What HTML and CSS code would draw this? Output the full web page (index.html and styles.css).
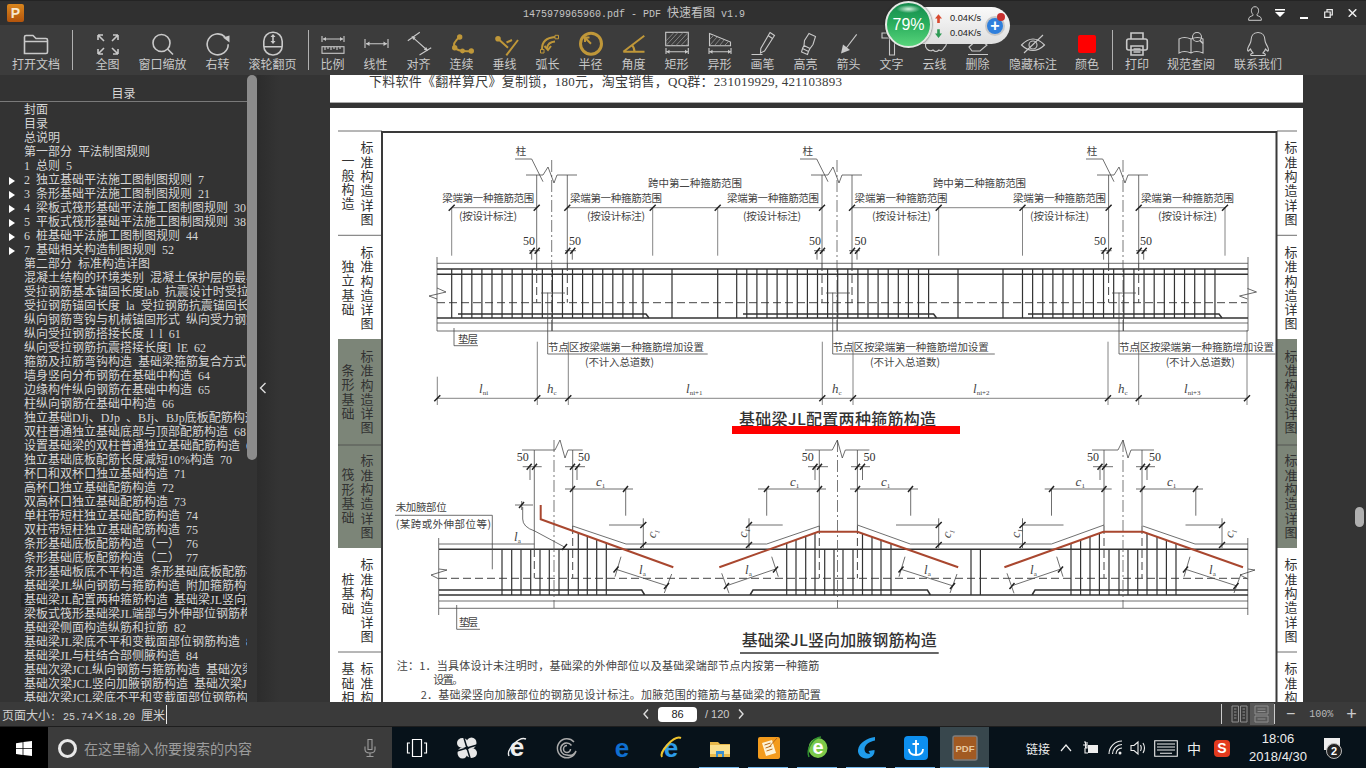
FILE: index.html
```html
<!DOCTYPE html>
<html lang="zh-CN">

<head>
    <meta charset="UTF-8">
    <title>PDF 快速看图</title>
    <link rel="stylesheet" href="styles.css">
</head>

<body>
    <header class="titlebar">
        <div class="logo">P</div>
        <div class="doc-title">1475979965960.pdf - PDF <span class="cjk">快速看图</span> v1.9</div>
        <div class="win-btns">
            <svg class="win-user" viewBox="0 0 14 15"><path d="M7 .7c-2.4 0-3.6 1.800-3.600 4 0 1.500.6 2.800 1.500 3.600v1.200C3 10.300.7 11 .7 12.700v1.600h12.600v-1.600c0-1.700-2.300-2.400-4.200-3.200V8.300c.9-.8 1.500-2.100 1.500-3.600 0-2.200-1.200-4-3.600-4z"/></svg>
            <svg class="win-menu" viewBox="0 0 10 8"><path d="M0 0h10v1.600H0zM0 3h10L5 8z"/></svg>
            <svg class="win-min" viewBox="0 0 8 8"><path d="M0 6h8v2H0z"/></svg>
            <svg class="win-max" viewBox="0 0 9 9"><path d="M.7 3h5.500v5.300H.7zM3 3V.7h5.300V6H6.200"/></svg>
            <svg class="win-close" viewBox="0 0 9 8"><path d="M.7.3l7.600 7.400M8.300.3L.7 7.700"/></svg>
        </div>
    </header>

    <nav class="toolbar">
        <div class="tool t-open"><svg viewBox="0 0 28 28"><path d="M2.500 24.500V8q0-1.500 1.500-1.500h7l3 3h10q1.500 0 1.500 1.500v12q0 1.500-1.500 1.500zM2.500 12.500h23"/></svg><span>打开文档</span></div>
        <i class="sep"></i>
        <div class="tool wide"><svg viewBox="0 0 28 28"><path d="M4 6l6 6M4 6h5M4 6v5M24 6l-6 6M24 6h-5M24 6v5M4 25l6-6M4 25h5M4 25v-5M24 25l-6-6M24 25h-5M24 25v-5"/></svg><span>全图</span></div>
        <div class="tool wide"><svg viewBox="0 0 28 28"><circle cx="12.500" cy="14" r="8.500"/><path d="M18.500 20l5.500 5.500"/></svg><span>窗口缩放</span></div>
        <div class="tool wide"><svg viewBox="0 0 28 28"><path d="M21 7.800A10.500 10.500 0 1 0 24.200 15.300"/><path class="solid" d="M19 8.500l6.500-2v7z"/></svg><span>右转</span></div>
        <div class="tool wide"><svg viewBox="0 0 28 28"><rect x="4.800" y="3.300" width="18.400" height="22.700" rx="9"/><path d="M5 17.700h18M14 6v8"/><path class="solid" d="M11.500 8L14 5l2.500 3zM11.500 12L14 15l2.500-3z"/></svg><span>滚轮翻页</span></div>
        <i class="sep"></i>
        <div class="tool first"><svg viewBox="0 0 28 28"><path class="fine" d="M3 7v6M25 7v6M4 10h20"/><rect class="fine" x="3" y="17.700" width="22" height="6.600"/><path class="fine" d="M6 18v3M9 18v2M12 18v3M15 18v2M18 18v3M21 18v2"/><path class="solid" d="M4 10l3-2v4zM24 10l-3-2v4z"/></svg><span>比例</span></div>
        <div class="tool"><svg viewBox="0 0 28 28"><path class="fine" d="M3 10v9M26 10v9M4 14.700h21"/><path class="solid" d="M4 14.700l3.500-2.200v4.400zM25 14.700l-3.500-2.200v4.400z"/></svg><span>线性</span></div>
        <div class="tool"><svg viewBox="0 0 28 28"><path class="fine" d="M2.800 11.700l12-8.400M14.500 26l11.700-7.300M7 7.700l15.500 13.800"/><path class="solid" d="M6.500 7.200l4.200 1.200-2.400 2.700zM23 22l-4.200-1.200 2.400-2.700z"/></svg><span>对齐</span></div>
        <div class="tool"><svg class="gold" viewBox="0 0 28 28"><path d="M11.700 8Q4 14 6.700 18.700 10 23 23.300 22"/><circle class="gold-dot" cx="11.700" cy="8" r="2.700"/><circle class="gold-dot" cx="6.700" cy="18.700" r="2.700"/><circle class="gold-dot" cx="14.500" cy="22" r="2.400"/><circle class="gold-dot" cx="23.300" cy="22" r="2.700"/></svg><span>连续</span></div>
        <div class="tool"><svg class="gold" viewBox="0 0 28 28"><path d="M7 9.700l10 9M27 11L15.300 26.300M15.500 13.500l5.500-2.500"/><circle class="gold-dot" cx="7" cy="9.700" r="2.800"/></svg><span>垂线</span></div>
        <div class="tool"><svg class="gold" viewBox="0 0 28 28"><path d="M8 20Q8 9 21 8M13 19q1-6 8-6.500"/><path class="thin-gold" d="M6.500 20.500h3.500v3.500H6.500zM21 6.300h3.500v3.500H21z"/><path d="M10.500 17l3.500 4 3-4"/></svg><span>弧长</span></div>
        <div class="tool"><svg class="gold" viewBox="0 0 28 28"><circle class="ring" cx="14" cy="14.700" r="10.500"/><path d="M14 14.700l-6-6M8 13V8.500h4.500"/></svg><span>半径</span></div>
        <div class="tool"><svg class="gold" viewBox="0 0 28 28"><path d="M3.300 22.700H24.500M3.300 22.700L24.300 6.700M14.500 23q0-4.500-3-7.500"/></svg><span>角度</span></div>
        <div class="tool"><svg viewBox="0 0 28 28"><rect class="fine" x="2.700" y="3.300" width="22.600" height="13.400"/><path class="hatch" d="M3 12l8-8.500M3 16.500L15 3.500M8 16.500L20 3.500M13 16.500L25 3.500M18 16.500l7-7.500M23 16.500l2-2"/><path class="fine" d="M3 19v6M25.300 19v6M3 22.700h22.300"/><path class="solid" d="M3.500 22.700l3-2v4zM25 22.700l-3-2v4z"/></svg><span>矩形</span></div>
        <div class="tool"><svg viewBox="0 0 28 28"><path class="fine" d="M3.500 4.500l21 8.500v3.700h-21z"/><path class="hatch" d="M4 10l4-4M4 16l7-8M9 16l6-7M14 16l4-5M19 16l3-3"/><path class="fine" d="M3 19v6M25 19v6M3 22.700h22"/><path class="solid" d="M3.500 22.700l3-2v4zM25 22.700l-3-2v4z"/></svg><span>异形</span></div>
        <div class="tool"><svg viewBox="0 0 28 28"><path class="fine" d="M21 3.500l4.500 3L15.500 22l-4 2 .3-4.500zM19 6.500l4.500 3M2.500 25.500h11"/></svg><span>画笔</span></div>
        <div class="tool"><svg viewBox="0 0 28 28"><path class="fine" d="M17 4.500l6.500 3-2.500 8-3 4-6-3 .5-5zM12 16.500l6 3-1.500 3-6-3zM10.500 19.500l6 3-1 3-6-2.500z"/></svg><span>高亮</span></div>
        <div class="tool"><svg viewBox="0 0 28 28"><path class="fine" d="M21.700 5.300L9 22"/><path class="solid" d="M6 24.500l2-9 7 5.500z"/></svg><span>箭头</span></div>
        <div class="tool"><svg viewBox="0 0 28 28"><path class="fine" d="M4 4h20v5h-7.500v17h-5V9H4z"/></svg><span>文字</span></div>
        <div class="tool"><svg viewBox="0 0 28 28"><path class="fine" d="M6 20q-4-5 2-8 1-6 7-4 6-3 8 3 5 3 0 8-2 4-5 2-3 3-6 0-3 2-6-1z"/></svg><span>云线</span></div>
        <div class="tool"><svg viewBox="0 0 28 28"><path class="fine" d="M5 18l9-8 9 6-7 6H8zM4 25.500h20"/></svg><span>删除</span></div>
        <div class="tool t-hide"><svg viewBox="0 0 28 28"><path class="fine" d="M2.500 16Q14 4 25.500 16 14 27 2.500 16z"/><circle class="fine" cx="14" cy="16" r="4"/><path class="fine" d="M24 6L5 24"/></svg><span>隐藏标注</span></div>
        <div class="tool t-color"><svg viewBox="0 0 28 28"><rect class="swatch" x="5" y="6" width="18" height="18" rx="2"/></svg><span>颜色</span></div>
        <i class="sep sep-print"></i>
        <div class="tool t-print"><svg viewBox="0 0 28 28"><path d="M8 10V4h12v6"/><rect x="3.700" y="10" width="20.600" height="11" rx="2"/><path d="M8 17h12v9H8zM10.500 20h7M10.500 23h7"/></svg><span>打印</span></div>
        <div class="tool t-spec"><svg viewBox="0 0 28 28"><path class="fine" d="M2 24V10q5-3 12 0 7-3 12 0v14q-7-3-12 0-7-3-12 0zM14 10v14"/><circle class="fine" cx="20" cy="8" r="4.500"/><path d="M23 11.500l3 3"/></svg><span>规范查阅</span></div>
        <div class="tool t-qq"><svg viewBox="0 0 28 28"><path class="fine" d="M14 3.500c-5 0-7 4-7 8 0 2-1 3-2.500 6-1.500 3-1 5 0 4.500l2-2c.5 2 1.500 3 2.500 4-2 .5-3 1.500-2 2.500h14c1-1 0-2-2-2.500 1-1 2-2 2.500-4l2 2c1 .5 1.500-1.500 0-4.500-1.500-3-2.500-4-2.500-6 0-4-2-8-7-8z"/></svg><span>联系我们</span></div>
    </nav>

    <div class="speed">
        <div class="speed-ball">79%</div>
        <div class="speed-rates">
            <p><svg class="up" viewBox="0 0 8 10"><path d="M4 0l4 5H5.500v5h-3V5H0z"/></svg>0.04K/s</p>
            <p><svg class="down" viewBox="0 0 8 10"><path d="M4 10L0 5h2.500V0h3v5H8z"/></svg>0.04K/s</p>
        </div>
        <div class="speed-plus">+<i></i></div>
    </div>

    <main class="workspace">
        <aside class="toc">
            <div class="toc-main">
                <h2>目录</h2>
                <ul>
                    <li>封面</li>
                    <li>目录</li>
                    <li>总说明</li>
                    <li>第一部分 平法制图规则</li>
                    <li>1 总则 5</li>
                    <li class="branch">2 独立基础平法施工图制图规则 7</li>
                    <li class="branch">3 条形基础平法施工图制图规则 21</li>
                    <li class="branch">4 梁板式筏形基础平法施工图制图规则 30</li>
                    <li class="branch">5 平板式筏形基础平法施工图制图规则 38</li>
                    <li class="branch">6 桩基础平法施工图制图规则 44</li>
                    <li class="branch">7 基础相关构造制图规则 52</li>
                    <li>第二部分 标准构造详图</li>
                    <li>混凝土结构的环境类别 混凝土保护层的最小厚度 54</li>
                    <li>受拉钢筋基本锚固长度lab 抗震设计时受拉钢筋基本锚固长度</li>
                    <li>受拉钢筋锚固长度 la 受拉钢筋抗震锚固长度 laE</li>
                    <li>纵向钢筋弯钩与机械锚固形式 纵向受力钢筋</li>
                    <li>纵向受拉钢筋搭接长度 l l 61</li>
                    <li>纵向受拉钢筋抗震搭接长度l lE 62</li>
                    <li>箍筋及拉筋弯钩构造 基础梁箍筋复合方式 63</li>
                    <li>墙身竖向分布钢筋在基础中构造 64</li>
                    <li>边缘构件纵向钢筋在基础中构造 65</li>
                    <li>柱纵向钢筋在基础中构造 66</li>
                    <li>独立基础DJj、DJp 、BJj、BJp底板配筋构造 67</li>
                    <li>双柱普通独立基础底部与顶部配筋构造 68</li>
                    <li>设置基础梁的双柱普通独立基础配筋构造 69</li>
                    <li>独立基础底板配筋长度减短10%构造 70</li>
                    <li>杯口和双杯口独立基础构造 71</li>
                    <li>高杯口独立基础配筋构造 72</li>
                    <li>双高杯口独立基础配筋构造 73</li>
                    <li>单柱带短柱独立基础配筋构造 74</li>
                    <li>双柱带短柱独立基础配筋构造 75</li>
                    <li>条形基础底板配筋构造（一） 76</li>
                    <li>条形基础底板配筋构造（二） 77</li>
                    <li>条形基础板底不平构造 条形基础底板配筋构造</li>
                    <li>基础梁JL纵向钢筋与箍筋构造 附加箍筋构造</li>
                    <li class="current">基础梁JL配置两种箍筋构造 基础梁JL竖向加腋钢筋构造</li>
                    <li>梁板式筏形基础梁JL端部与外伸部位钢筋构造</li>
                    <li>基础梁侧面构造纵筋和拉筋 82</li>
                    <li>基础梁JL梁底不平和变截面部位钢筋构造 83</li>
                    <li>基础梁JL与柱结合部侧腋构造 84</li>
                    <li>基础次梁JCL纵向钢筋与箍筋构造 基础次梁</li>
                    <li>基础次梁JCL竖向加腋钢筋构造 基础次梁JCL</li>
                    <li>基础次梁JCL梁底不平和变截面部位钢筋构造</li>
                </ul>
            </div>
            <div class="toc-scroll"><i></i></div>
        </aside>

        <section class="viewer">
            <div class="collapse"><svg viewBox="0 0 8 12"><path d="M6.500 1L1.500 6l5 5"/></svg></div>
            <div class="pages">
                <div class="page page-prev">
                    <p>下料软件《翻样算尺》复制锁，180元，淘宝销售，QQ群：231019929, 421103893</p>
                </div>
                <div class="page page-cur">
                    <svg class="sheet" viewBox="330 108 973 594">
                        <!-- 边栏 -->
                        <rect class="tab-grey" x="338" y="339" width="44" height="209"/>
                        <rect class="tab-grey" x="1277" y="339" width="20" height="209"/>
                        <path class="thin" d="M338 131h44M338 235.300h44M338 445h44M338 652h44M1277 131h20M1277 235.300h20M1277 445h20M1277 652h20"/>
                        <path class="frame" d="M382 702V132H1276.500V702"/>

                        <text class="tab" x="367" y="141">标准构造详图</text>
                        <text class="tab" x="348" y="154">一般构造</text>
                        <text class="tab" x="367" y="245.500">标准构造详图</text>
                        <text class="tab" x="348" y="259.500">独立基础</text>
                        <text class="tab" x="367" y="349.500">标准构造详图</text>
                        <text class="tab" x="348" y="363.500">条形基础</text>
                        <text class="tab" x="367" y="454">标准构造详图</text>
                        <text class="tab" x="348" y="468">筏形基础</text>
                        <text class="tab" x="367" y="558">标准构造详图</text>
                        <text class="tab" x="348" y="572.500">桩基础</text>
                        <text class="tab" x="367" y="662">标准构造详图</text>
                        <text class="tab" x="348" y="662">基础相关</text>

                        <text class="tab" x="1291" y="141">标准构造详图</text>
                        <text class="tab" x="1291" y="245.500">标准构造详图</text>
                        <text class="tab" x="1291" y="349.500">标准构造详图</text>
                        <text class="tab" x="1291" y="454">标准构造详图</text>
                        <text class="tab" x="1291" y="558">标准构造详图</text>
                        <text class="tab" x="1291" y="662">标准构造详图</text>
                        <rect class="paper" x="1297" y="108" width="6" height="594"/>

                        <!-- 上图：配置两种箍筋 -->
                        <path class="thin" d="M437 263.300H1248M437 323H1248M437 331H1248M437 257v74M1248 257v74"/>
                        <path class="rebar" d="M437 269H1248M437 274.300H1248M437 318H1248"/>
                        <path class="rebar" d="M458 314H646l3 4M743 314H933.600l3 4M1028 314H1219l3 4"/>
                        <path class="dash" d="M437 302.700H1247M536.700 263V302.700M567.300 263V302.700M822 263V302.700M852 263V302.700M1108.600 263V302.700M1138.700 263V302.700"/>
                        <path class="center" d="M551.700 160V331M837 160V331M1123 160V331"/>
                        <path class="stir" d="M451.700 269v49m10.070-49v49m10.070-49v49m10.070-49v49m10.070-49v49m10.070-49v49m10.070-49v49m10.070-49v49m10.070-49v49m10.070-49v49m10.070-49v49m10.070-49v49m10.070-49v49m10.070-49v49m10.070-49v49m10.070-49v49m10.070-49v49m10.070-49v49m10.070-49v49m10.070-49v49M672 269v49M717.700 269v49M736.700 269v49m10.100-49v49m10.100-49v49m10.100-49v49m10.100-49v49m10.100-49v49m10.100-49v49m10.100-49v49m10.100-49v49m10.100-49v49m10.100-49v49m10.100-49v49m10.100-49v49m10.100-49v49m10.100-49v49m10.100-49v49m10.100-49v49m10.100-49v49m10.100-49v49m10.100-49v49M958 269v49M1003 269v49M1022.500 269v49m10.130-49v49m10.130-49v49m10.130-49v49m10.130-49v49m10.130-49v49m10.130-49v49m10.130-49v49m10.130-49v49m10.130-49v49m10.130-49v49m10.130-49v49m10.130-49v49m10.130-49v49m10.130-49v49m10.130-49v49m10.130-49v49m10.130-49v49m10.130-49v49m10.130-49v49"/>
                        <path class="zig" d="M437 288l9 4-17 4 8 3M1247.500 288.500l9 3.500-17 4 8 3"/>

                        <!-- 柱 -->
                        <path class="thin" d="M526 175h17l5-8 6 16 3-8h20M536.700 175v88M567.300 175v88M515 159h16.700L543 181.700"/>
                        <path class="thin" d="M811 175h17l5-8 6 16 3-8h20M822 175v88M852 175v88M800 159h16.700L828 181.700"/>
                        <path class="thin" d="M1097 175h17l5-8 6 16 3-8h20M1108.600 175v88M1138.700 175v88M1086 159h16.700l11.300 22.700"/>
                        <text class="lb" x="521" y="151" text-anchor="middle" dy=".35em">柱</text>
                        <text class="lb" x="807.700" y="151" text-anchor="middle" dy=".35em">柱</text>
                        <text class="lb" x="1092" y="151" text-anchor="middle" dy=".35em">柱</text>

                        <path class="gray" d="M451.700 207.700H536.700M567.300 207.700H822M852 207.700H1108.600M1138.700 207.700H1225M451.700 207.700v48M652.700 207.700v48M717.700 207.700v48M938.700 207.700v48M1022.500 207.700v48M1225 207.700v48"/>
                        <path class="tick" d="M448.700 210.700l6-6M533.700 210.700l6-6M564.300 210.700l6-6M649.700 210.700l6-6M714.700 210.700l6-6M819 210.700l6-6M849 210.700l6-6M935.700 210.700l6-6M1019.500 210.700l6-6M1105.600 210.700l6-6M1135.700 210.700l6-6M1222 210.700l6-6"/>

                        <g class="lb">
                            <text x="442.300" y="202" textLength="92">梁端第一种箍筋范围</text>
                            <text x="570" y="202" textLength="92">梁端第一种箍筋范围</text>
                            <text x="727" y="202" textLength="92">梁端第一种箍筋范围</text>
                            <text x="854.600" y="202" textLength="93">梁端第一种箍筋范围</text>
                            <text x="1013" y="202" textLength="93">梁端第一种箍筋范围</text>
                            <text x="1141" y="202" textLength="93">梁端第一种箍筋范围</text>
                            <text x="459" y="220" textLength="58">(按设计标注)</text>
                            <text x="587" y="220" textLength="58">(按设计标注)</text>
                            <text x="743" y="220" textLength="58">(按设计标注)</text>
                            <text x="872" y="220" textLength="59">(按设计标注)</text>
                            <text x="1030" y="220" textLength="59">(按设计标注)</text>
                            <text x="1158" y="220" textLength="59">(按设计标注)</text>
                            <text x="648" y="187" textLength="94">跨中第二种箍筋范围</text>
                            <text x="933" y="187" textLength="93">跨中第二种箍筋范围</text>
                            <text x="548" y="351" textLength="156">节点区按梁端第一种箍筋增加设置</text>
                            <text x="832.700" y="351" textLength="156">节点区按梁端第一种箍筋增加设置</text>
                            <text x="1119" y="351" textLength="155">节点区按梁端第一种箍筋增加设置</text>
                            <text x="585" y="366" textLength="69">(不计入总道数)</text>
                            <text x="870" y="366" textLength="70">(不计入总道数)</text>
                            <text x="1165.700" y="366" textLength="69">(不计入总道数)</text>
                            <text x="458" y="343" textLength="20">垫层</text>
                        </g>

                        <g class="num">
                            <text x="523" y="245" textLength="12">50</text>
                            <text x="569" y="245" textLength="12">50</text>
                            <text x="809" y="245" textLength="12">50</text>
                            <text x="854.600" y="245" textLength="12">50</text>
                            <text x="1094" y="245" textLength="12">50</text>
                            <text x="1140" y="245" textLength="12">50</text>
                        </g>
                        <path class="thin" d="M529 250.700h11M531.700 250.700v9M565 250.700h11M572.300 250.700v9M814 250.700h11M817 250.700v9M849 250.700h11M857 250.700v9M1100.600 250.700h11M1103.600 250.700v9M1136 250.700h11M1143.700 250.700v9"/>
                        <path class="tick" d="M529.700 253.700l5-6M534.700 253.700l5-6M565.300 253.700l5-6M570.300 253.700l5-6M815 253.700l5-6M820 253.700l5-6M850 253.700l5-6M855 253.700l5-6M1101.600 253.700l5-6M1106.600 253.700l5-6M1136.700 253.700l5-6M1141.700 253.700l5-6"/>

                        <path class="thin" d="M541 293h24M547.700 292.700V354H707.700M552.300 293V331M826 293h24M832.700 292.700V354H994.800M837.300 293V331M1112 293h24M1119 292.700V354H1275.500M1123.500 293V331"/>
                        <path class="thin" d="M454 328v17.700h24"/>

                        <path class="gray" d="M437.300 398.300H1247M437.300 376.700V405M537.300 341.700V405M568.300 341.700V405M822.300 341.700V405M853 341.700V405M1108 341.700V405M1138.700 341.700V405M1247 330V405"/>
                        <path class="tick" d="M434.300 401.300l6-6M534.300 401.300l6-6M565.300 401.300l6-6M819.300 401.300l6-6M850 401.300l6-6M1105 401.300l6-6M1135.700 401.300l6-6M1244 401.300l6-6"/>
                        <g class="dim">
                            <text x="479" y="393">l<tspan class="sub" dy="2">ni</tspan></text>
                            <text x="547" y="393">h<tspan class="sub" dy="2">c</tspan></text>
                            <text x="686" y="393">l<tspan class="sub" dy="2">ni+1</tspan></text>
                            <text x="832" y="393">h<tspan class="sub" dy="2">c</tspan></text>
                            <text x="973" y="393">l<tspan class="sub" dy="2">ni+2</tspan></text>
                            <text x="1118" y="393">h<tspan class="sub" dy="2">c</tspan></text>
                            <text x="1184" y="393">l<tspan class="sub" dy="2">ni+3</tspan></text>
                        </g>

                        <text class="head" x="739" y="425" textLength="197">基础梁JL配置两种箍筋构造</text>
                        <rect class="mark" x="732" y="426" width="228" height="8"/>

                        <!-- 下图：竖向加腋 -->
                        <path class="thin" d="M439 544H534.300M438.700 538V615M1247.800 538V615M439 601H1248M439 608.300H1248M572.700 526L626 544H766.700L819.300 526M857.400 525L910.300 544H1051.500L1104 525M1142.800 526L1195 544H1248"/>
                        <path class="rebar" d="M439 549.300H1248M439 595H1248M439 590H641.700l3 5M750 595l3-5H927.400l3 5M1032 595l3-5H1248"/>
                        <path class="dash" d="M439 578.300H1247M534.300 549V578.300M572.700 526V578.300M819.300 526V578.300M857.400 526V578.300M1104 526V578.300M1142 526V578.300"/>
                        <path class="center" d="M554 440V608M837.500 440V608M1123 440V608"/>
                        <path class="thin" d="M522 450h12.300M534.300 450v99M534.300 450h20.700l5-10 5 18 3-8h4.700M572.700 450v76M572.700 450h10"/>
                        <path class="thin" d="M805 450h14.300M819.300 450h13l5-10 5 18 3-8h12.100M819.300 450v76M857.400 450v76M857.400 450h12"/>
                        <path class="thin" d="M1092 450h12M1104 450h14l5-10 5 18 3-8h11M1104 450v76M1142 450v76M1142 450h12"/>
                        <path class="zig" d="M439 569l8 1-16 5 8 4M1248 569l7 1-15 5 8 4"/>
                        <path class="stir" d="M502 549.300V595M511.700 549.300V595M521 549.300V595M530.700 549.300V595M540 549.300V595M549.300 549.300V595M559 549.300V595M568.300 549.300V595M578.300 532.800V595M587.300 536V595M596.700 539.700V595M606.300 543V595M786.700 543V595M796 539.700V595M805.700 536V595M815 533V595M824.700 549.300V595M834 549.300V595M843 549.300V595M853 549.300V595M862.500 533.500V595M872 536.900V595M881 540V595M891 543.500V595M971 549.300V595M980.400 549.300V595M1071 543.300V595M1080.600 540V595M1090 536.500V595M1099.400 533V595M1109 549.300V595M1119 549.300V595M1128 549.300V595M1137.700 549.300V595M1147 533V595M1157 536.700V595M1166.400 540V595M1176 543.500V595"/>
                        <path class="red" d="M540.700 505V519.300L673.300 567.300M719.300 567.300L818.300 531.700H857.400L958.200 567.300M1004.400 567.300L1103.500 531.700H1142.800L1243 567.300"/>

                        <path class="thin" d="M522.700 466.700h19M530 466.700V480M565 466.700h20M577 466.700V480M808 466.700h20M815 466.700V480M851 466.700h19M862.500 466.700V480M1093 466.700h20M1100 466.700V480M1136 466.700h19M1147 466.700V480"/>
                        <path class="tick" d="M526.700 469.700l5-6M532 469.700l5-6M570 469.700l5-6M575 469.700l5-6M812.500 469.700l5-6M817 469.700l5-6M855 469.700l5-6M860 469.700l5-6M1097.500 469.700l5-6M1102 469.700l5-6M1140 469.700l5-6M1145 469.700l5-6"/>
                        <g class="num">
                            <text x="516.700" y="461" textLength="12">50</text>
                            <text x="578" y="461" textLength="12">50</text>
                            <text x="801.700" y="461" textLength="12">50</text>
                            <text x="863.500" y="461" textLength="12">50</text>
                            <text x="1087" y="461" textLength="12">50</text>
                            <text x="1149" y="461" textLength="12">50</text>
                        </g>

                        <path class="thin" d="M565 489h68M625.700 489v26.700M758 489h68M766.700 489v26.700M850 489h68M910.700 489v26.700M1044.700 489h67M1051.500 489v26.700M1136 489h67M1195.800 489v26.700"/>
                        <path class="tick" d="M570 492l5-6M623 492l5-6M764 492l5-6M817 492l5-6M855 492l5-6M908 492l5-6M1049 492l5-6M1101.500 492l5-6M1140 492l5-6M1193 492l5-6"/>
                        <g class="dim">
                            <text x="596" y="486">c<tspan class="sub" dy="2">1</tspan></text>
                            <text x="790" y="486">c<tspan class="sub" dy="2">1</tspan></text>
                            <text x="881" y="486">c<tspan class="sub" dy="2">1</tspan></text>
                            <text x="1075.600" y="486">c<tspan class="sub" dy="2">1</tspan></text>
                            <text x="1167" y="486">c<tspan class="sub" dy="2">1</tspan></text>
                            <text transform="rotate(-70 652.700 533)" x="648" y="537">c<tspan class="sub" dy="2">1</tspan></text>
                            <text transform="rotate(-80 743.300 533)" x="739" y="537">c<tspan class="sub" dy="2">1</tspan></text>
                            <text transform="rotate(-70 947.600 533)" x="943" y="537">c<tspan class="sub" dy="2">1</tspan></text>
                            <text transform="rotate(-80 1016 533)" x="1011.500" y="537">c<tspan class="sub" dy="2">1</tspan></text>
                            <text transform="rotate(-70 1230 533)" x="1225.500" y="537">c<tspan class="sub" dy="2">1</tspan></text>
                        </g>
                        <path class="thin" d="M609 525h34.300M643.300 518.300V548M749 518.300V548M749 525h33.700M896 525h42.700M938.700 518.300V548M1022.500 518.300V548M1022.500 525h41M1185.500 525h36.500M1222 518.300V548"/>
                        <path class="tick" d="M640.300 528l6-6M640.300 548l6-6M746 528l6-6M746 548l6-6M935.700 528l6-6M935.700 548l6-6M1019.500 528l6-6M1019.500 548l6-6M1219 528l6-6M1219 548l6-6"/>

                        <path class="thin" d="M515 505h18M521.700 501v9M522.700 507v12q0 8 12 12L565 547.300"/>
                        <path class="tick" d="M519 508l5-6M562 550l5-6"/>
                        <path class="thin" d="M616 569.300L666.700 585.700M621 556.700L615 576.700M671.700 574L664.300 593M726.700 585.700L775.700 569M721.700 573.300L729 593.300M771.700 556.700L778.300 576.700M901 569.300L952.400 585.700M905 556.700L899 576.700M957 574L950 593M1012 585.700L1060.800 569M1007 573.300L1014 593.300M1056.700 556.700L1063 576.700M1185.600 569.300L1236 585.700M1190 556.700L1184 576.700M1241 574L1234 593"/>
                        <path class="tick" d="M613.500 572.500l5-6M664 589l5-6M724 589l5-6M773 572.500l5-6M898.500 572.500l5-6M950 589l5-6M1009.500 589l5-6M1058 572.500l5-6M1183 572.500l5-6M1233.500 589l5-6"/>
                        <g class="dim">
                            <text x="514" y="541">l<tspan class="sub" dy="2">a</tspan></text>
                            <text x="639" y="574">l<tspan class="sub" dy="2">a</tspan></text>
                            <text x="745" y="574">l<tspan class="sub" dy="2">a</tspan></text>
                            <text x="924" y="574">l<tspan class="sub" dy="2">a</tspan></text>
                            <text x="1030" y="574">l<tspan class="sub" dy="2">a</tspan></text>
                            <text x="1209" y="574">l<tspan class="sub" dy="2">a</tspan></text>
                        </g>

                        <path class="thin" d="M395 515.300H492.300V569.300M456.700 605V629.300H480"/>
                        <g class="lb">
                            <text x="395.700" y="511" textLength="51">未加腋部位</text>
                            <text x="395.700" y="528" textLength="95.300">(某跨或外伸部位等)</text>
                            <text x="459" y="626" textLength="19">垫层</text>
                        </g>

                        <text class="head" x="741.700" y="646" textLength="195">基础梁JL竖向加腋钢筋构造</text>
                        <path class="title-line" d="M740 653H938.700"/>

                        <g class="lb note">
                            <text x="396.700" y="670" textLength="422.600">注：1．当具体设计未注明时，基础梁的外伸部位以及基础梁端部节点内按第一种箍筋</text>
                            <text x="433.300" y="684" textLength="30">设置。</text>
                            <text x="420.700" y="699" textLength="400">2．基础梁竖向加腋部位的钢筋见设计标注。加腋范围的箍筋与基础梁的箍筋配置</text>
                        </g>
                    </svg>
                </div>
            </div>
            <div class="page-scroll"></div>
        </section>
    </main>

    <footer class="statusbar">
        <div class="size"><span class="cjk">页面大小</span>:<span class="size-val">25.74<span class="cjk">×</span>18.20 <span class="cjk">厘米</span></span></div>
        <div class="pager">
            <svg viewBox="0 0 8 12"><path d="M6 1.500L2 6l4 4.500"/></svg>
            <div class="page-input">86</div>
            <span>/ 120</span>
            <svg viewBox="0 0 8 12"><path d="M2 1.500L6 6l-4 4.500"/></svg>
        </div>
        <div class="view-btns">
            <i class="vsep"></i>
            <div class="view-btn"><svg viewBox="0 0 17 18"><path d="M1 1h6.500v16H1zM9.500 1H16v16H9.500zM3 4h2.500M3 7h2.500M3 10h2.500M3 13h2.500M11.500 4h2.500M11.500 7h2.500M11.500 10h2.500M11.500 13h2.500"/></svg></div>
            <div class="view-btn on"><svg viewBox="0 0 17 18"><path d="M2 1h13v8H2zM2 11h13v6H2zM4.500 4h8M4.500 6.500h8M4.500 14h8"/></svg></div>
            <i class="vsep"></i>
            <span class="zoom-minus">−</span>
            <span class="zoom-val">100%</span>
            <span class="zoom-plus">+</span>
        </div>
    </footer>

    <footer class="taskbar">
        <div class="start"><svg viewBox="0 0 16 15"><path d="M0 2.200L6.600 1.200v6H0zM7.400 1.100L16 0v7.200H7.400zM0 7.900h6.600v6L0 12.900zM7.400 7.900H16V15L7.400 13.900z"/></svg></div>
        <div class="search">
            <i class="cortana"></i>
            <span>在这里输入你要搜索的内容</span>
            <svg class="mic" viewBox="0 0 12 20"><path d="M4 1.500h4v10H4zM1 8.500v3q0 3.500 5 3.500t5-3.500v-3M6 15v3M2.500 18.500h7"/></svg>
        </div>
        <div class="apps">
            <div class="app"><svg viewBox="0 0 24 24"><path class="tv" d="M7.500 3.500h9v17h-9zM5 7H2.500v10H5M19 7h2.500v10H19"/></svg></div>
            <div class="app"><svg viewBox="0 0 24 24"><g class="white"><ellipse cx="7.500" cy="7" rx="5.500" ry="5"/><ellipse cx="16.500" cy="7" rx="5" ry="5.500"/><ellipse cx="7.500" cy="17" rx="5" ry="5.500"/><ellipse cx="16.500" cy="17" rx="5.500" ry="5"/></g><path class="cut" d="M12 12L9 2M12 12l10-3M12 12l3 10M12 12L2 15"/></svg></div>
            <div class="app"><svg viewBox="0 0 24 24"><text class="ie white-t" x="12" y="20" text-anchor="middle">e</text><path class="ring-w" d="M4 20C1 14 14 0 21 3"/></svg></div>
            <div class="app"><svg viewBox="0 0 24 24"><path class="spiral" d="M19 6A9.500 9.500 0 1 0 21 15 8 8 0 0 1 12 19 6 6 0 1 1 16.500 9.500M15.500 13A3.500 3.500 0 1 1 12 9.500"/></svg></div>
            <div class="app app-shift"><svg viewBox="0 0 24 24"><text class="ie edge" x="12" y="20.500" text-anchor="middle">e</text></svg></div>
            <div class="app"><svg viewBox="0 0 24 24"><text class="ie ieblue" x="12" y="20.500" text-anchor="middle">e</text><path class="ring-y" d="M3 21C0 16 15-1 22 2"/></svg></div>
            <div class="app run"><svg viewBox="0 0 24 24"><path class="fold-b" d="M2 6h8l2 2h10v13H2z"/><path class="fold-f" d="M2 9h20v9H2z"/><path class="fold-s" d="M8 15h8v6h-2v-3h-4v3H8z"/></svg></div>
            <div class="app run"><svg viewBox="0 0 24 24"><rect class="note-bg" x="1" y="1" width="22" height="22" rx="2"/><path class="note-pg" d="M5 7l10-3 4 13-10 3z"/><path class="note-ln" d="M7.500 9l6-2M8.500 12l6-2M9.500 15l6-2M20 2l-8 9"/></svg></div>
            <div class="app run"><svg viewBox="0 0 24 24"><ellipse class="green-b" cx="12" cy="12" rx="9.500" ry="10"/><text class="ie green-t" x="12" y="18" text-anchor="middle">e</text><path class="green-s" d="M3 21C0 14 6 2 15 1"/></svg></div>
            <div class="app run"><svg viewBox="0 0 24 24"><path class="blue-g" d="M20 1C13 2 4 6 3 14c-.5 5 4 9 9 8.500 5-.5 8-4 7.500-8.500l-6 1 1.500 2.500c-2 1-5.500-.5-5.500-4 0-5 5-8 10.500-9z"/></svg></div>
            <div class="app run"><svg viewBox="0 0 24 24"><rect class="anchor-bg" x="0" y="0" width="24" height="24" rx="4"/><path class="anchor" d="M12 4v15M8.500 8H15M5 13q0 6 7 6t7-6"/></svg></div>
            <div class="app run active"><svg viewBox="0 0 24 24"><rect class="pdf-bg" x="0" y="0" width="24" height="24" rx="2"/><text class="pdf-t" x="12" y="16" text-anchor="middle">PDF</text></svg></div>
        </div>
        <div class="tray">
            <span class="tray-link">链接</span>
            <svg class="t-up" viewBox="0 0 12 8"><path d="M1 7l5-6 5 6"/></svg>
            <svg class="t-bat" viewBox="0 0 16 14"><path class="solid-w" d="M5 4h10v8H5z"/><path class="line-w" d="M1 1h1.500v6H4V1M0 4h4M2 7v5h3"/></svg>
            <svg class="t-wifi" viewBox="0 0 16 16"><path class="line-w" d="M1 14A13 13 0 0 1 14 1M4.500 14A9.500 9.500 0 0 1 14 4.500M8 14A6 6 0 0 1 14 8"/><circle class="solid-w" cx="12" cy="13" r="1.500"/></svg>
            <svg class="t-vol" viewBox="0 0 16 16"><path class="line-w" d="M1 5.500h3L8 2v12l-4-3.500H1zM10.500 5q1.500 3 0 6M13 3q3 5 0 10"/></svg>
            <svg class="t-kbd" viewBox="0 0 24 17"><path class="line-w" d="M.7.700h22.600v15.600H.7zM3 4h18M3 7h18M3 10h18M6 13.300h12"/></svg>
            <span class="tray-ime">中</span>
            <div class="sogou">S</div>
            <div class="clock"><span>18:06</span><span>2018/4/30</span></div>
            <div class="notify">
                <svg viewBox="0 0 16 16"><path class="solid-w" d="M0 0h16v12H6l-3 3v-3H0z"/></svg>
                <b>2</b>
            </div>
        </div>
    </footer>
</body>

</html>
```

FILE: styles.css
```css
* {
    box-sizing: border-box;
}

html,
body {
    margin: 0;
    width: 1366px;
    height: 768px;
    overflow: hidden;
}

body {
    display: flex;
    flex-direction: column;
    position: relative;
    background: #333;
    color: #d4d4d4;
    font-family: "Noto Sans CJK SC", sans-serif;
    font-size: 12px;
}

svg {
    display: block;
}

/* title bar */
.titlebar {
    flex: 0 0 25px;
    display: flex;
    align-items: center;
    position: relative;
    background: #303030;
    border-top: 1px solid #242424;
}

.logo {
    width: 17px;
    height: 18px;
    margin-left: 7px;
    border-radius: 2px;
    background: linear-gradient(#d9861e, #b3540c);
    color: #f6e7cf;
    font: bold 14px/18px "Liberation Sans", sans-serif;
    text-align: center;
}

.doc-title {
    flex: 1;
    padding-right: 4px;
    color: #c4c4c4;
    font: 10px/14px "Liberation Mono", "Noto Sans CJK SC", monospace;
    text-align: center;
    white-space: pre;
}

.cjk {
    font-family: "Noto Sans CJK SC", sans-serif;
    font-size: 12px;
}

.win-btns {
    display: flex;
    align-items: center;
    margin-right: 9px;
}

.win-btns svg {
    fill: none;
    stroke: #eee;
    stroke-width: 1.2;
}

.win-user {
    width: 14px;
    height: 15px;
    stroke-width: 1 !important;
    stroke: #ccc !important;
}

.win-menu {
    width: 10px;
    height: 8px;
    margin-left: 13px;
    fill: #fff !important;
    stroke: none !important;
}

.win-min {
    width: 8px;
    height: 8px;
    margin: 3px 0 0 15px;
    fill: #fff !important;
    stroke: none !important;
}

.win-max {
    width: 9px;
    height: 9px;
    margin-left: 16px;
}

.win-close {
    width: 9px;
    height: 8px;
    margin-left: 15px;
    stroke-width: 1.5 !important;
}

/* toolbar */
.toolbar {
    flex: 0 0 50px;
    display: flex;
    padding: 4px 0 0 8px;
    background: #3c3c3c;
}

.tool {
    flex: 0 0 auto;
    width: 43px;
    display: flex;
    flex-direction: column;
    align-items: center;
}

.tool svg {
    width: 28px;
    height: 28px;
    fill: none;
    stroke: #c9c9c9;
    stroke-width: 1.6;
    overflow: visible;
}

.tool span {
    color: #c8c8c8;
    line-height: 14px;
    white-space: nowrap;
}

.t-open {
    width: 56px;
}

.wide {
    width: 55px;
}

.first {
    margin-left: 2px;
}

.t-hide {
    width: 68px;
}

.t-color {
    width: 40px;
}

.t-print {
    width: 48px;
}

.t-spec {
    width: 60px;
}

.t-qq {
    width: 74px;
}

.sep {
    flex: 0 0 1px;
    height: 40px;
    margin: 1px 7px 0 8px;
    background: #b0b0b0;
}

.sep:nth-of-type(2) {
    margin-right: 0;
}

.sep-print {
    margin-left: 5px;
    margin-right: 0;
}

.tool svg .solid {
    fill: #c9c9c9;
    stroke: none;
}

.tool svg .fine {
    stroke-width: 1.1;
}

.tool svg .hatch {
    stroke: #8a8a8a;
    stroke-width: .9;
}

.tool svg.gold {
    stroke: #bf9739;
    stroke-width: 2;
}

.tool svg .gold-dot {
    fill: #bf9739;
    stroke: none;
}

.tool svg .thin-gold {
    stroke-width: 1;
}

.tool svg .ring {
    stroke-width: 3;
}

.tool svg .swatch {
    fill: #f00;
    stroke: none;
}

/* speed widget */
.speed {
    position: absolute;
    top: 1px;
    left: 885px;
    height: 47px;
    width: 125px;
}

.speed-ball {
    position: absolute;
    left: 0;
    top: 0;
    z-index: 2;
    width: 47px;
    height: 47px;
    border: 2px solid #e4e8e4;
    border-radius: 50%;
    background: radial-gradient(ellipse 12px 4px at 50% 6px, #d6f2df 0, rgba(214, 242, 223, 0) 100%), linear-gradient(#148a4d, #27ab5b 45%, #57d37a);
    box-shadow: 0 0 2px #222;
    color: #fff;
    font: 16px/43px "Liberation Sans", sans-serif;
    text-align: center;
}

.speed-rates {
    position: absolute;
    left: 20px;
    top: 6px;
    width: 105px;
    height: 37px;
    padding: 4px 0 0 45px;
    border-radius: 19px;
    background: linear-gradient(#fafafa, #dedede);
    color: #222;
    font: 9.200px/15px "Liberation Sans", sans-serif;
}

.speed-rates p {
    position: relative;
    margin: 0;
    white-space: nowrap;
}

.speed-rates svg {
    position: absolute;
    left: -15px;
    top: 3px;
    width: 7px;
    height: 9px;
}

.up {
    fill: #d8492f;
}

.down {
    fill: #2f9a55;
}

.speed-plus {
    position: absolute;
    left: 102px;
    top: 17px;
    z-index: 3;
    width: 16px;
    height: 16px;
    border-radius: 50%;
    background: #2f7fdc;
    box-shadow: 0 0 0 2px #c8c8c8;
    color: #fff;
    font: bold 16px/16px "Liberation Sans", sans-serif;
    text-align: center;
}

.speed-plus i {
    position: absolute;
    left: 10px;
    top: -5px;
    width: 8px;
    height: 8px;
    border-radius: 50%;
    background: #c93030;
}

/* main area */
.workspace {
    flex: 0 0 627px;
    display: flex;
    overflow: hidden;
}

.toc {
    flex: 0 0 257px;
    display: flex;
    background: #333;
}

.toc-main {
    flex: 0 0 247px;
    overflow: hidden;
}

.toc h2 {
    margin: 0;
    height: 27px;
    padding-top: 10px;
    border-bottom: 1px solid #7a7a7a;
    color: #d8d8d8;
    font-size: 12px;
    font-weight: normal;
    line-height: 16px;
    text-align: center;
}

.toc ul {
    margin: 0;
    padding: 1px 0 0;
    list-style: none;
    color: #d6d6d6;
    font-family: "Liberation Serif", "Noto Sans CJK SC", serif;
    font-size: 12px;
    line-height: 14px;
    word-spacing: 3px;
    white-space: nowrap;
}

.toc li {
    height: 14px;
    padding-left: 24px;
    overflow: hidden;
}

.toc li.branch {
    padding-left: 9px;
}

.toc li.branch::before {
    content: "";
    display: inline-block;
    margin-right: 9px;
    border-left: 6px solid #fff;
    border-top: 4.500px solid transparent;
    border-bottom: 4.500px solid transparent;
    vertical-align: -1px;
}

.toc li.current {
    margin-left: 21px;
    padding-left: 3px;
    background: #272727;
}

.toc-scroll {
    flex: 0 0 10px;
}

.toc-scroll i {
    display: block;
    height: 385px;
    border-radius: 5px;
    background: #8c8c8c;
}

.viewer {
    flex: 1;
    display: flex;
    position: relative;
    background: linear-gradient(90deg, #2c2c2c, #343434 22px);
}

.collapse {
    flex: 0 0 73px;
    padding: 307px 0 0 2px;
}

.collapse svg {
    width: 8px;
    height: 12px;
    fill: none;
    stroke: #ddd;
    stroke-width: 1.4;
}

.pages {
    flex: 0 0 973px;
}

.page {
    background: #fff;
    overflow: hidden;
}

.page-prev {
    height: 28px;
    margin-bottom: 5px;
    border-bottom: 1px solid #aaa;
}

.page-prev p {
    margin: 0;
    padding-left: 39px;
    color: #3a3a3a;
    font-family: "Liberation Serif", "Noto Sans CJK SC", serif;
    font-size: 13px;
    letter-spacing: .27px;
    line-height: 14px;
    white-space: nowrap;
}

.page-cur {
    height: 594px;
}

.sheet {
    width: 973px;
    height: 594px;
    font-family: "Noto Sans CJK SC", sans-serif;
}

.page-scroll {
    position: absolute;
    top: 432px;
    right: 2px;
    width: 9px;
    height: 20px;
    border-radius: 5px;
    background: #b0b0b0;
}

/* drawing */
.sheet path {
    fill: none;
}

.tab-grey {
    fill: #7c8578;
}

.paper {
    fill: #fff;
}

.mark {
    fill: #f00;
}

.frame {
    stroke: #3a3a3a;
    stroke-width: 2;
}

.thin {
    stroke: #4a4a4a;
    stroke-width: .8;
}

.gray {
    stroke: #666;
    stroke-width: .8;
}

.rebar {
    stroke: #333;
    stroke-width: 1.5;
}

.stir {
    stroke: #333;
    stroke-width: 1.2;
}

.dash {
    stroke: #444;
    stroke-width: 1;
    stroke-dasharray: 8 4;
}

.center {
    stroke: #555;
    stroke-width: .8;
    stroke-dasharray: 12 3 2 3;
}

.zig {
    stroke: #444;
    stroke-width: .8;
}

.tick {
    stroke: #222;
    stroke-width: 1.5;
}

.red {
    stroke: #a9472f;
    stroke-width: 2;
}

.title-line {
    stroke: #333;
    stroke-width: 1.6;
}

.tab {
    fill: #333;
    font-size: 13px;
    letter-spacing: 1.300px;
    writing-mode: vertical-rl;
}

.lb {
    fill: #444;
    font-size: 10.500px;
}

.note {
    font-size: 11px;
}

.num {
    fill: #333;
    font: 12px "Liberation Serif", serif;
}

.dim {
    fill: #444;
    font: italic 13px "Liberation Serif", serif;
}

.sub {
    font-size: 7px;
    font-style: normal;
}

.head {
    fill: #333;
    font-size: 16px;
    font-weight: 500;
}

/* status bar */
.statusbar {
    flex: 0 0 25px;
    display: flex;
    align-items: center;
    position: relative;
    background: #3a3a3a;
    border-bottom: 1px solid #1e1e1e;
}

.size {
    flex: 0 0 167px;
    height: 19px;
    padding-left: 2px;
    border-right: 1px solid #eee;
    color: #d0d0d0;
    font: 10px/19px "Liberation Mono", "Noto Sans CJK SC", monospace;
    white-space: pre;
}

.size-val {
    margin-left: 7px;
}

.pager {
    display: flex;
    align-items: center;
    margin-left: 475px;
    color: #ccc;
    font: 11px "Liberation Sans", sans-serif;
}

.pager svg {
    width: 8px;
    height: 12px;
    fill: none;
    stroke: #ddd;
    stroke-width: 1.4;
}

.page-input {
    width: 39px;
    height: 15px;
    margin: 0 8px;
    border-radius: 4px;
    background: #fff;
    color: #222;
    line-height: 15px;
    text-align: center;
}

.pager span {
    margin-right: 8px;
}

.view-btns {
    display: flex;
    align-items: center;
    position: absolute;
    left: 1221px;
    top: 0;
    height: 24px;
    color: #ccc;
}

.vsep {
    width: 1px;
    height: 20px;
    background: #ccc;
}

.view-btn {
    width: 22px;
    height: 22px;
    margin-left: 6px;
    padding: 2px 3px;
}

.view-btn + .view-btn {
    width: 24px;
    margin-left: 0;
}

.view-btn.on {
    background: #595959;
}

.view-btn svg {
    width: 17px;
    height: 18px;
    fill: none;
    stroke: #8f8f8f;
    stroke-width: 1;
}

.zoom-minus {
    margin-left: 11px;
    font: 16px "Liberation Sans", sans-serif;
}

.zoom-val {
    margin-left: 14px;
    color: #bbb;
    font: 10px "Liberation Mono", monospace;
}

.zoom-plus {
    margin-left: 13px;
    font: 18px "Liberation Sans", sans-serif;
}

/* taskbar */
.taskbar {
    flex: 0 0 42px;
    display: flex;
    background: #07121a;
}

.start {
    flex: 0 0 48px;
    padding: 14px 0 0 16px;
    background: #000;
}

.start svg {
    width: 16px;
    height: 15px;
    fill: #fff;
}

.search {
    flex: 0 0 344px;
    display: flex;
    align-items: center;
    background: #3b3b3b;
    color: #9c9c9c;
    font-size: 14px;
}

.cortana {
    flex: 0 0 19px;
    height: 19px;
    margin: 0 7px 0 10px;
    border: 3px solid #e8e8e8;
    border-radius: 50%;
}

.mic {
    width: 12px;
    height: 20px;
    margin-left: 112px;
    fill: none;
    stroke: #9c9c9c;
    stroke-width: 1.1;
}

.apps {
    display: flex;
}

.app {
    flex: 0 0 49px;
    padding-top: 9px;
    display: flex;
    justify-content: center;
}

.app:nth-child(-n+4) {
    flex-basis: 50px;
}

.app-shift {
    margin-left: 5px;
}

.app svg {
    width: 24px;
    height: 24px;
    overflow: visible;
}

.run {
    position: relative;
}

.run::after {
    content: "";
    position: absolute;
    left: 4px;
    right: 5px;
    bottom: 0;
    height: 2px;
    background: #76b9ed;
}

.active {
    background: #38474d;
}

.active::after {
    left: 0;
    right: 0;
}

.tv {
    fill: none;
    stroke: #fff;
    stroke-width: 1.2;
}

.white {
    fill: #e8e8e8;
}

.cut {
    fill: none;
    stroke: #07121a;
    stroke-width: 1.5;
}

.ie {
    font: bold 26px "Liberation Sans", sans-serif;
}

.white-t {
    fill: #eee;
}

.ring-w {
    fill: none;
    stroke: #eee;
    stroke-width: 1.4;
}

.spiral {
    fill: none;
    stroke: #aaa;
    stroke-width: 1.5;
}

.edge {
    fill: #0f6fd0;
}

.ieblue {
    fill: #2d9ce8;
}

.ring-y {
    fill: none;
    stroke: #f0c52e;
    stroke-width: 2;
}

.fold-b {
    fill: #e8b84a;
}

.fold-f {
    fill: #fbe08e;
}

.fold-s {
    fill: #3a8fd0;
}

.note-bg {
    fill: #f39b1d;
}

.note-pg {
    fill: #fdf3d8;
}

.note-ln {
    fill: none;
    stroke: #b86a1a;
    stroke-width: 1;
}

.green-b {
    fill: #7cc94a;
}

.green-t {
    fill: #fff;
    font-size: 20px;
}

.green-s {
    fill: none;
    stroke: #2f8f2f;
    stroke-width: 1.5;
}

.blue-g {
    fill: #1f9bea;
}

.anchor-bg {
    fill: #0d8fef;
}

.anchor {
    fill: none;
    stroke: #fff;
    stroke-width: 1.8;
}

.pdf-bg {
    fill: #a25a22;
    stroke: #7d7d7d;
    stroke-width: 1.5;
}

.pdf-t {
    fill: #e8c8a0;
    font: bold 9.500px "Liberation Sans", sans-serif;
}

.tray {
    flex: 1;
    display: flex;
    align-items: center;
    position: relative;
    color: #eee;
}

.line-w {
    fill: none;
    stroke: #eee;
    stroke-width: 1.1;
}

.solid-w {
    fill: #eee;
}

.tray-link {
    margin-left: 37px;
    font-size: 12px;
}

.t-up {
    width: 12px;
    height: 8px;
    margin-left: 10px;
    fill: none;
    stroke: #eee;
    stroke-width: 1.2;
}

.t-bat {
    width: 16px;
    height: 14px;
    margin-left: 11px;
}

.t-wifi {
    width: 16px;
    height: 16px;
    margin-left: 9px;
}

.t-vol {
    width: 16px;
    height: 16px;
    margin-left: 6px;
}

.t-kbd {
    width: 24px;
    height: 17px;
    margin-left: 8px;
}

.tray-ime {
    margin-left: 9px;
    font-size: 14px;
}

.sogou {
    width: 16px;
    height: 17px;
    margin-left: 13px;
    border-radius: 4px;
    background: #e33a1e;
    color: #fff;
    font: bold 14px/17px "Liberation Sans", sans-serif;
    text-align: center;
}

.clock {
    display: flex;
    flex-direction: column;
    align-items: center;
    width: 62px;
    margin-left: 17px;
    font: 13px/18px "Liberation Sans", sans-serif;
}

.notify {
    position: relative;
    width: 16px;
    height: 16px;
    margin: -4px 0 0 15px;
}

.notify svg {
    width: 16px;
    height: 16px;
}

.notify b {
    position: absolute;
    left: 2px;
    top: 5px;
    width: 16px;
    height: 16px;
    border: 1px solid #bbb;
    border-radius: 50%;
    background: #222;
    color: #fff;
    font: bold 11px/14px "Liberation Sans", sans-serif;
    text-align: center;
}
```
